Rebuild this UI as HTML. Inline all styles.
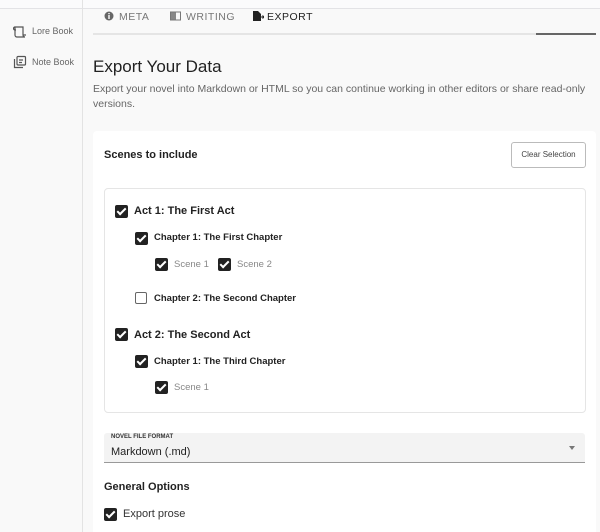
<!DOCTYPE html><html><head><style>
html,body{margin:0;width:600px;height:532px;overflow:hidden}
body{background:#f9f9f9;font-family:"Liberation Sans",sans-serif;position:relative}
.a{position:absolute}
.cb{position:absolute;width:13px;height:13px;background:#222;border-radius:2px}
.cb:after{content:"";position:absolute;left:4px;top:1px;width:3px;height:7px;border:solid #fff;border-width:0 2px 2px 0;transform:rotate(45deg)}
.ub{position:absolute;width:10px;height:10px;border:1.5px solid #666;border-radius:2px}
.t{position:absolute;white-space:nowrap}
</style></head><body>
<div class="a" style="left:0;top:0;width:600px;height:8px;background:#fbfbfc;border-bottom:1px solid #e3e3e6"></div>
<div class="a" style="left:82px;top:0;width:1px;height:532px;background:#e3e3e3"></div>
<svg class="a" style="left:13px;top:25px" width="14" height="14" viewBox="0 0 14 14" fill="none" stroke="#555" stroke-width="1.2"><path d="M2 2h8v8a2 2 0 0 0 2 2H4a2 2 0 0 1-2-2zM2 2a1.5 1.5 0 0 0 0 3h1M10 10h3"/></svg>
<div class="t" style="left:32px;top:26px;font-size:9px;color:#666">Lore Book</div>
<svg class="a" style="left:13px;top:55px" width="14" height="14" viewBox="0 0 14 14" fill="none" stroke="#555" stroke-width="1.2"><rect x="4" y="1.5" width="8.5" height="8.5" rx="1"/><path d="M1.5 4v8.5H10M6 5h4M6 7.5h3"/></svg>
<div class="t" style="left:32px;top:57px;font-size:9px;color:#666">Note Book</div>
<svg class="a" style="left:104px;top:11px" width="10" height="10"><circle cx="5" cy="5" r="4.5" fill="#666"/><rect x="4.3" y="4" width="1.4" height="4" fill="#fff"/><rect x="4.3" y="2" width="1.4" height="1.2" fill="#fff"/></svg>
<div class="t" style="left:119px;top:11px;font-size:10.5px;color:#777;letter-spacing:.5px">META</div>
<svg class="a" style="left:170px;top:11px" width="11" height="10"><rect x="0.5" y="1" width="10" height="8" fill="none" stroke="#777"/><rect x="1" y="1.5" width="5" height="7" fill="#888"/></svg>
<div class="t" style="left:186px;top:11px;font-size:10.5px;color:#777;letter-spacing:.5px">WRITING</div>
<svg class="a" style="left:252px;top:10px" width="12" height="12"><path d="M1 1h5l3 3v7H1z" fill="#222"/><path d="M8 7h4M10.5 5.5l1.5 1.5-1.5 1.5" stroke="#222" fill="none"/></svg>
<div class="t" style="left:267px;top:11px;font-size:10.5px;color:#222;letter-spacing:.5px">EXPORT</div>
<div class="a" style="left:93px;top:33px;width:503px;height:2px;background:#e5e5e5"></div>
<div class="a" style="left:536px;top:33px;width:60px;height:2px;background:#666"></div>
<div class="t" style="left:93px;top:57px;font-size:17px;color:#222">Export Your Data</div>
<div class="t" style="left:93px;top:83px;font-size:10.5px;color:#666">Export your novel into Markdown or HTML so you can continue working in other editors or share read-only</div>
<div class="t" style="left:93px;top:98px;font-size:10.5px;color:#666">versions.</div>
<div class="a" style="left:93px;top:131px;width:503px;height:401px;background:#fff;border-radius:4px 4px 0 0"></div>
<div class="t" style="left:104px;top:149px;font-size:11px;font-weight:bold;color:#222">Scenes to include</div>
<div class="a" style="left:511px;top:142px;width:73px;height:24px;border:1px solid #bbb;border-radius:3px;font-size:8px;color:#444;text-align:center;line-height:24px">Clear Selection</div>
<div class="a" style="left:104px;top:188px;width:480px;height:223px;border:1px solid #e5e5e5;border-radius:4px"></div>
<div class="cb" style="left:115px;top:205px"></div><div class="t" style="left:134px;top:205px;font-size:11px;font-weight:bold;color:#222">Act 1: The First Act</div>
<div class="cb" style="left:135px;top:232px"></div><div class="t" style="left:154px;top:232px;font-size:9.5px;font-weight:bold;color:#222">Chapter 1: The First Chapter</div>
<div class="cb" style="left:155px;top:258px"></div><div class="t" style="left:174px;top:259px;font-size:9.5px;color:#888">Scene 1</div>
<div class="cb" style="left:218px;top:258px"></div><div class="t" style="left:237px;top:259px;font-size:9.5px;color:#888">Scene 2</div>
<div class="ub" style="left:135px;top:292px"></div><div class="t" style="left:154px;top:293px;font-size:9.5px;font-weight:bold;color:#222">Chapter 2: The Second Chapter</div>
<div class="cb" style="left:115px;top:328px"></div><div class="t" style="left:134px;top:329px;font-size:11px;font-weight:bold;color:#222">Act 2: The Second Act</div>
<div class="cb" style="left:135px;top:355px"></div><div class="t" style="left:154px;top:356px;font-size:9.5px;font-weight:bold;color:#222">Chapter 1: The Third Chapter</div>
<div class="cb" style="left:155px;top:381px"></div><div class="t" style="left:174px;top:382px;font-size:9.5px;color:#888">Scene 1</div>
<div class="a" style="left:104px;top:433px;width:481px;height:29px;background:#f3f3f3;border-bottom:1px solid #999;border-radius:3px 3px 0 0"></div>
<div class="t" style="left:111px;top:434px;font-size:6px;font-weight:bold;color:#333">NOVEL FILE FORMAT</div>
<div class="t" style="left:111px;top:446px;font-size:11px;color:#222">Markdown (.md)</div>
<div class="a" style="left:569px;top:446px;width:0;height:0;border:3px solid transparent;border-top:4px solid #777"></div>
<div class="t" style="left:104px;top:481px;font-size:11px;font-weight:bold;color:#222">General Options</div>
<div class="cb" style="left:104px;top:508px"></div><div class="t" style="left:123px;top:508px;font-size:11px;color:#333">Export prose</div>
</body></html>
